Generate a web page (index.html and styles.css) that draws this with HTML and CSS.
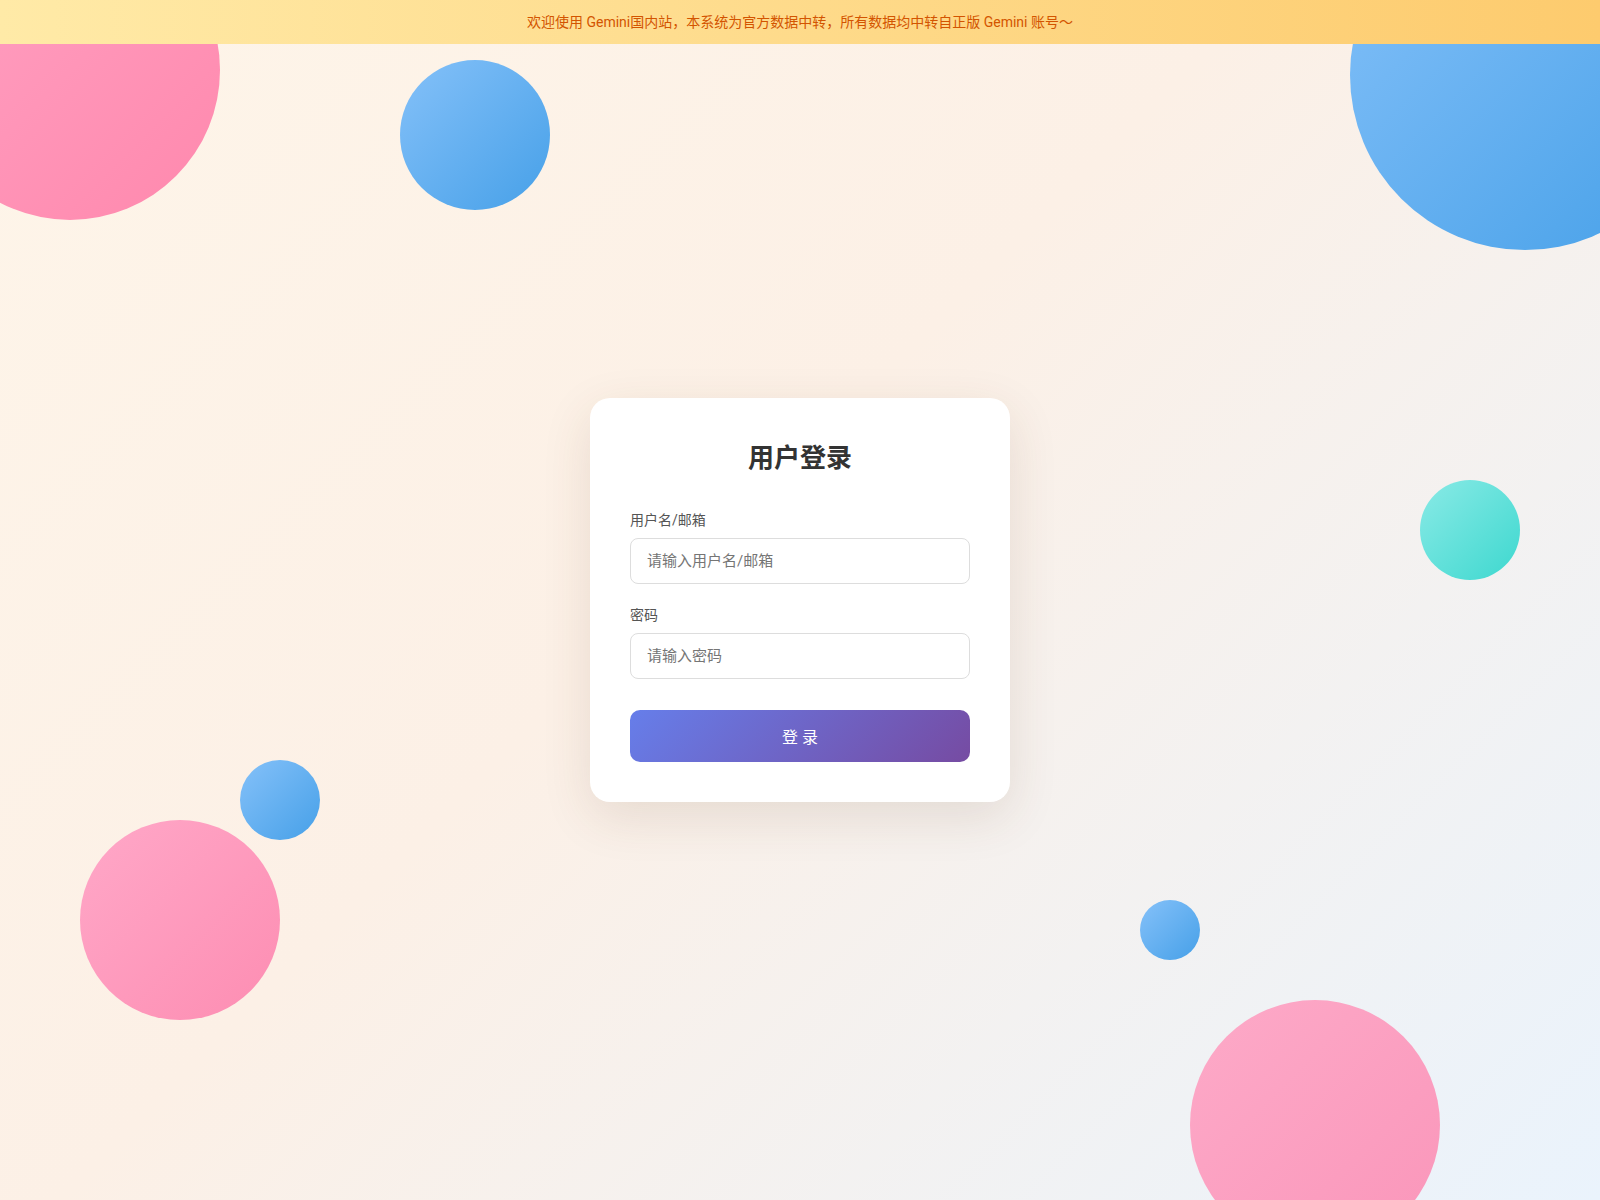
FILE: index.html
```html
<!DOCTYPE html>
<html lang="zh-CN">
<head>
<meta charset="UTF-8">
<title>用户登录</title>
<link rel="stylesheet" href="styles.css">
</head>
<body>
<div class="notice">欢迎使用 Gemini国内站，本系统为官方数据中转，所有数据均中转自正版 Gemini 账号～</div>
<div class="bubbles">
  <span class="bubble pink b1"></span>
  <span class="bubble blue b2"></span>
  <span class="bubble blue b3"></span>
  <span class="bubble teal b4"></span>
  <span class="bubble blue b5"></span>
  <span class="bubble pink b6"></span>
  <span class="bubble blue b7"></span>
  <span class="bubble pink b8"></span>
</div>
<main class="page">
  <form class="card">
    <h2 class="title">用户登录</h2>
    <div class="field">
      <label class="label" for="user">用户名/邮箱</label>
      <input class="input" id="user" type="text" placeholder="请输入用户名/邮箱">
    </div>
    <div class="field">
      <label class="label" for="pwd">密码</label>
      <input class="input" id="pwd" type="password" placeholder="请输入密码">
    </div>
    <button class="btn" type="button">登 录</button>
  </form>
</main>
</body>
</html>
```
FILE: styles.css
```css
* { box-sizing: border-box; }
html, body { margin: 0; padding: 0; height: 100%; }
body {
  font-family: Roboto, "Noto Sans CJK SC", sans-serif;
  background: linear-gradient(135deg, #fef5e9 0%, #fcf0e6 45%, #eaf3fc 100%);
  overflow: hidden;
  position: relative;
}
.notice {
  position: fixed;
  top: 0; left: 0; right: 0;
  height: 44px;
  line-height: 45px;
  text-align: center;
  font-size: 14px;
  color: #d35400;
  background: linear-gradient(90deg, #ffeaa7 0%, #fdcb6e 100%);
  z-index: 10;
}
.bubbles { position: absolute; inset: 0; overflow: hidden; z-index: 0; }
.bubble { position: absolute; border-radius: 50%; display: block; }
.pink { background: linear-gradient(135deg, #ffa8c8 0%, #fd8db2 100%); }
.blue { background: linear-gradient(135deg, #85c1f9 0%, #46a0e8 100%); }
.teal { background: linear-gradient(135deg, #8aeae6 0%, #3dd8cf 100%); }
.b1 { width: 300px; height: 300px; left: -80px; top: -80px; background: linear-gradient(135deg, #ffa2c3 0%, #ff88ad 100%); }
.b2 { width: 150px; height: 150px; left: 400px; top: 60px; }
.b3 { width: 350px; height: 350px; right: -100px; top: -100px; }
.b4 { width: 100px; height: 100px; left: 1420px; top: 480px; }
.b5 { width: 80px; height: 80px; left: 240px; top: 760px; }
.b6 { width: 200px; height: 200px; left: 80px; top: 820px; }
.b7 { width: 60px; height: 60px; left: 1140px; top: 900px; }
.b8 { width: 250px; height: 250px; left: 1190px; top: 1000px; background: linear-gradient(135deg, #fdaac8 0%, #fa96ba 100%); }
.page {
  position: relative;
  z-index: 1;
  height: 100vh;
  display: flex;
  align-items: center;
  justify-content: center;
}
.card {
  width: 420px;
  padding: 40px;
  background: #fff;
  border-radius: 20px;
  box-shadow: 0 15px 50px rgba(90, 60, 30, 0.12);
  margin: 0;
}
.title {
  margin: 0 0 32px;
  font-size: 26px;
  line-height: 40px;
  font-weight: 700;
  color: #333;
  text-align: center;
}
.field { margin-bottom: 21px; }
.label {
  display: block;
  font-size: 14px;
  line-height: 20px;
  color: #555;
  margin-bottom: 8px;
}
.input {
  display: block;
  width: 100%;
  height: 46px;
  padding: 0 16px;
  border: 1px solid #ddd;
  border-radius: 8px;
  font-family: inherit;
  font-size: 15px;
  color: #333;
  background: #fff;
  outline: none;
}
.input::placeholder { color: #757575; }
.btn {
  display: block;
  width: 100%;
  height: 52px;
  margin-top: 31px;
  border: none;
  border-radius: 10px;
  background: linear-gradient(135deg, #667eea 0%, #764ba2 100%);
  color: #fff;
  font-family: inherit;
  font-size: 16px;
  cursor: pointer;
}
```
